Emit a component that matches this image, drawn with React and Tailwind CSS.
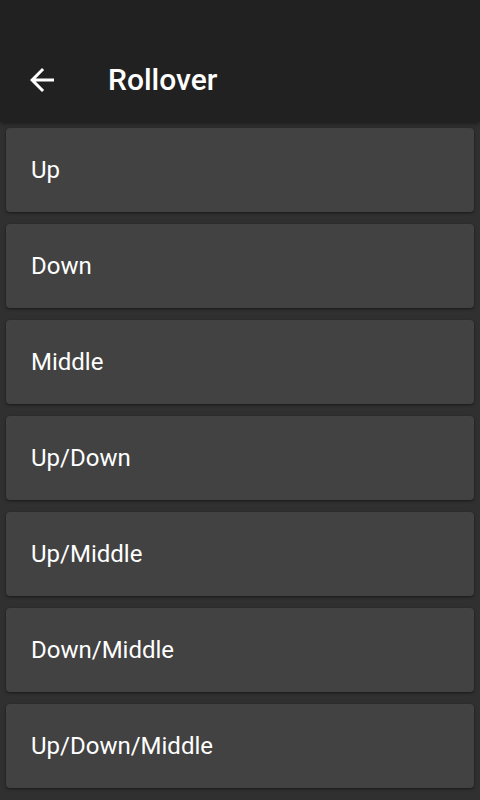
import React from 'react';

const items = ["Up", "Down", "Middle", "Up/Down", "Up/Middle", "Down/Middle", "Up/Down/Middle"];

const BackArrow = () => (
  <svg width="36" height="36" viewBox="0 0 24 24" fill="#ffffff">
    <path d="M20 11H7.83l5.59-5.59L12 4l-8 8 8 8 1.41-1.41L7.83 13H20v-2z" />
  </svg>
);

export default function App() {
  return (
    <div className="w-[480px] h-[800px] bg-[#303030] overflow-hidden flex flex-col" style={{ fontFamily: "Roboto, 'Liberation Sans', sans-serif" }}>
      <header className="h-[122px] shrink-0 bg-[#212121] pt-[38px] flex items-center shadow-[0_2px_4px_rgba(0,0,0,0.4)] relative z-10">
        <div className="flex items-center">
          <button className="ml-[24px] w-[36px] h-[36px] flex items-center justify-center">
            <BackArrow />
          </button>
          <h1 className="ml-[48px] text-[30px] font-medium text-white leading-none">Rollover</h1>
        </div>
      </header>
      <main className="flex flex-col">
        {items.map((label) => (
          <div
            key={label}
            className="mx-[6px] my-[6px] h-[84px] shrink-0 rounded-[4px] bg-[#424242] shadow-[0_1px_3px_rgba(0,0,0,0.5)] flex items-center pl-[25px]"
          >
            <span className="text-[24px] text-white">{label}</span>
          </div>
        ))}
      </main>
    </div>
  );
}
